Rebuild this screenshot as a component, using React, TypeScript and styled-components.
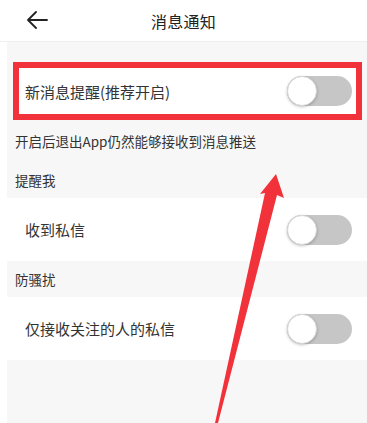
import styled, { createGlobalStyle } from "styled-components";

const GlobalStyle = createGlobalStyle`
    html, body {
        margin: 0;
        padding: 0;
        background: #ffffff;
    }
    body {
        font-family: "Noto Sans CJK SC", "Noto Sans", "Liberation Sans", sans-serif;
        color: #333333;
    }
`;

type Setting = { label: string; highlight?: boolean };

const sections: { title?: string; hint?: string; items: Setting[] }[] = [
    { items: [{ label: "新消息提醒(推荐开启)", highlight: true }], hint: "开启后退出App仍然能够接收到消息推送" },
    { title: "提醒我", items: [{ label: "收到私信" }] },
    { title: "防骚扰", items: [{ label: "仅接收关注的人的私信" }] },
];

function Toggle() {
    return (
        <Track>
            <Knob />
        </Track>
    );
}

function App() {
    return (
        <>
            <GlobalStyle />
            <Page>
                <Header>
                    <BackButton>
                        <svg width="22" height="18" viewBox="0 0 22 18">
                            <path d="M21 9H2M10 1L2 9l8 8" fill="none" stroke="#222" strokeWidth="1.8" strokeLinecap="round" strokeLinejoin="round" />
                        </svg>
                    </BackButton>
                    <Title>消息通知</Title>
                </Header>

                <Content>
                    <TopGap />
                    {sections.map((section, i) => (
                        <Section key={i}>
                            {section.title && <SectionTitle>{section.title}</SectionTitle>}
                            {section.items.map((item) => (
                                <Row key={item.label} $highlight={item.highlight}>
                                    <RowLabel>{item.label}</RowLabel>
                                    <Toggle />
                                </Row>
                            ))}
                            {section.hint && <Hint>{section.hint}</Hint>}
                        </Section>
                    ))}
                </Content>

                <Annotation width="367" height="423" viewBox="0 0 367 423">
                    <polygon
                        points="276,174 284,198 277,195 218,423 215,423 265,193 260,194"
                        fill="#f2323a"
                    />
                </Annotation>
            </Page>
        </>
    );
}

// STYLING
const Page = styled.div`
    position: relative;
    width: 367px;
    height: 423px;
    overflow: hidden;
    display: flex;
    flex-direction: column;
`;

const Header = styled.div`
    position: relative;
    height: 42px;
    flex-shrink: 0;
    display: flex;
    align-items: center;
    justify-content: center;
    background: #ffffff;
    border-bottom: 1px solid #eeeeee;
    box-sizing: border-box;
`;

const BackButton = styled.div`
    position: absolute;
    left: 26px;
    top: 11px;
    display: flex;
`;

const Title = styled.div`
    font-size: 16px;
    color: #222222;
    letter-spacing: 0.3px;
`;

const Content = styled.div`
    flex: 1;
    margin-left: 7px;
    background: #f7f7f7;
    display: flex;
    flex-direction: column;
`;

const TopGap = styled.div`
    height: 20px;
`;

const Section = styled.div`
    display: flex;
    flex-direction: column;
`;

const SectionTitle = styled.div`
    height: 36px;
    display: flex;
    align-items: center;
    padding-left: 8px;
    font-size: 13.5px;
    color: #333333;
`;

const Hint = styled.div`
    height: 42px;
    display: flex;
    align-items: center;
    padding-left: 8px;
    font-size: 13.5px;
    color: #333333;
`;

const Row = styled.div<{ $highlight?: boolean }>`
    display: flex;
    align-items: center;
    justify-content: space-between;
    background: #ffffff;
    box-sizing: border-box;
    height: ${(p) => (p.$highlight ? "58px" : "63px")};
    padding: ${(p) => (p.$highlight ? "0 4px 0 6px" : "0 15px 0 18px")};
    margin: ${(p) => (p.$highlight ? "0 5px 0 6px" : "0")};
    border: ${(p) => (p.$highlight ? "6px solid #f2323a" : "none")};
`;

const RowLabel = styled.div`
    font-size: 15px;
    color: #333333;
`;

const Track = styled.div`
    width: 65px;
    height: 30px;
    border-radius: 15px;
    background: #c6c6c6;
    position: relative;
    flex-shrink: 0;
`;

const Knob = styled.div`
    position: absolute;
    left: 0;
    top: 0;
    width: 30px;
    height: 30px;
    border-radius: 50%;
    background: #ffffff;
    box-sizing: border-box;
    border: 1px solid #d8d8d8;
    box-shadow: 0 1px 3px rgba(0, 0, 0, 0.25);
`;

const Annotation = styled.svg`
    position: absolute;
    left: 0;
    top: 0;
    pointer-events: none;
`;

export default App;
